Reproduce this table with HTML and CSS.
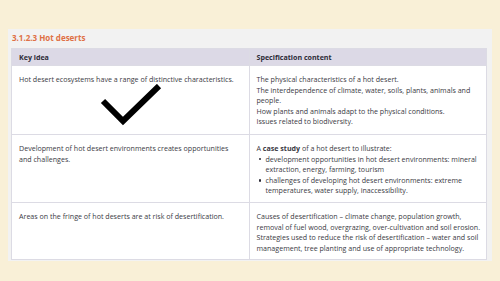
FILE: index.html
```html
<!DOCTYPE html>
<html>
<head>
<meta charset="utf-8">
<link rel="stylesheet" href="styles.css">
</head>
<body>
<div class="panel">
  <h2 class="title">3.1.2.3 Hot deserts</h2>
  <table class="spec">
    <thead>
      <tr><th>Key idea</th><th>Specification content</th></tr>
    </thead>
    <tbody>
      <tr class="r1">
        <td class="key">
          <p>Hot desert ecosystems have a range of distinctive characteristics.</p>
          <svg class="tick" width="64" height="44" viewBox="0 0 64 44"><polyline points="3,17 23,37 59,2" fill="none" stroke="#000" stroke-width="6"/></svg>
        </td>
        <td>
          <p>The physical characteristics of a hot desert.</p>
          <p>The interdependence of climate, water, soils, plants, animals and people.</p>
          <p>How plants and animals adapt to the physical conditions.</p>
          <p>Issues related to biodiversity.</p>
        </td>
      </tr>
      <tr class="r2">
        <td><p>Development of hot desert environments creates opportunities and challenges.</p></td>
        <td>
          <p>A <b>case study</b> of a hot desert to illustrate:</p>
          <ul>
            <li>development opportunities in hot desert environments: mineral extraction, energy, farming, tourism</li>
            <li>challenges of developing hot desert environments: extreme temperatures, water supply, inaccessibility.</li>
          </ul>
        </td>
      </tr>
      <tr class="r3">
        <td><p>Areas on the fringe of hot deserts are at risk of desertification.</p></td>
        <td>
          <p>Causes of desertification – climate change, population growth, removal of fuel wood, overgrazing, over-cultivation and soil erosion.</p>
          <p>Strategies used to reduce the risk of desertification – water and soil management, tree planting and use of appropriate technology.</p>
        </td>
      </tr>
    </tbody>
  </table>
</div>
</body>
</html>
```
FILE: styles.css
```css
html, body {
  margin: 0;
  padding: 0;
}
body {
  background: #f9f0d7;
  width: 500px;
  height: 281px;
  overflow: hidden;
  font-family: "Open Sans", "DejaVu Sans", sans-serif;
  color: #3b3a44;
}
.panel {
  margin: 29px 0 0 8px;
  width: 484px;
  height: 232px;
  box-sizing: border-box;
  background: #f2f2f2;
  padding: 0 5px 0 3px;
}
.title {
  margin: 0;
  height: 19px;
  padding-left: 1px;
  font-size: 8px;
  font-weight: 700;
  line-height: 17px;
  color: #df7045;
}
.spec {
  width: 476px;
  border-collapse: collapse;
  table-layout: fixed;
  background: #fff;
  font-size: 7.1px;
  line-height: 10.6px;
}
.spec th, .spec td {
  border: 1px solid #dcdbe4;
  text-align: left;
  vertical-align: top;
  padding: 8px 7px 0 7px;
}
.spec td + td {
  padding-right: 3px;
}
.spec th {
  background: #dcd9e6;
  height: 17px;
  padding: 0 7px;
  vertical-align: middle;
  font-weight: 700;
  color: #2e2c38;
  box-sizing: border-box;
}
.spec p {
  margin: 0;
}
.spec b {
  font-weight: 700;
}
.spec ul {
  margin: 0;
  padding: 0;
  list-style: none;
}
.spec li {
  position: relative;
  padding-left: 9px;
}
.spec li::before {
  content: "";
  position: absolute;
  left: 2px;
  top: 4.5px;
  width: 2.4px;
  height: 2.4px;
  border-radius: 50%;
  background: #2e2c38;
}
.r1 td { height: 69px; box-sizing: border-box; }
.r2 td { height: 68px; box-sizing: border-box; }
.r3 td { height: 57px; box-sizing: border-box; }
.key {
  position: relative;
}
.tick {
  position: absolute;
  left: 88px;
  top: 18px;
}
```
